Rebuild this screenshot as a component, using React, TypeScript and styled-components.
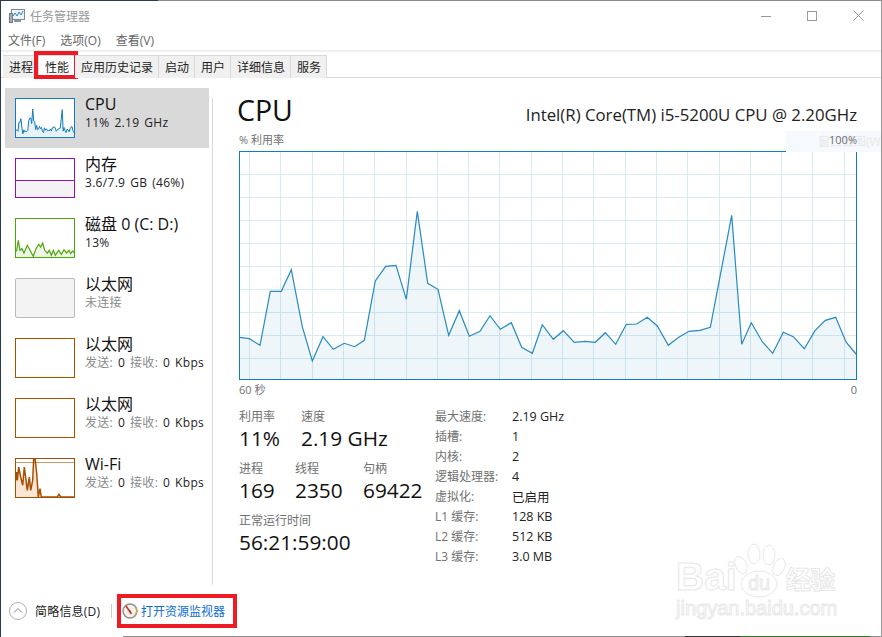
import React from "react"
import styled, { createGlobalStyle } from "styled-components"

const GlobalStyle = createGlobalStyle`
  html, body {
    margin: 0;
    padding: 0;
    background: #fff;
  }
  body {
    font-family: "Open Sans", "Noto Sans CJK SC", sans-serif;
    font-size: 12px;
    color: #111;
  }
`

const Window = styled.div`
  position: relative;
  box-sizing: border-box;
  width: 882px;
  height: 637px;
  display: flex;
  flex-direction: column;
  overflow: hidden;
  background: #fff;
  border-left: 1px solid #2c3c50;
  border-right: 1px solid #9a9a9a;
  &::before {
    content: "";
    position: absolute;
    top: 0;
    left: 0;
    right: 0;
    height: 1px;
    background: linear-gradient(90deg, #2c3c50 0 157px, #8c8c8c 157px);
  }
  &::after {
    content: "";
    position: absolute;
    bottom: 0;
    left: 0;
    right: 0;
    height: 1px;
    background: linear-gradient(
      90deg,
      #fff 0 122px,
      #8f8f8f 122px 684px,
      #333 684px 739px,
      #2a7a2a 739px 869px,
      #8f8f8f 869px
    );
  }
`

const TitleBar = styled.div`
  height: 30px;
  flex: none;
  box-sizing: border-box;
  padding: 1px 0 0 8px;
  display: flex;
  align-items: center;
  color: #999;
`

const TitleText = styled.span`
  margin-left: 5px;
  flex: 1;
`

const WindowButton = styled.div`
  width: 46px;
  height: 29px;
  display: flex;
  align-items: center;
  justify-content: center;
`

const MenuBar = styled.div`
  height: 20px;
  flex: none;
  display: flex;
  align-items: center;
  gap: 15px;
  padding-left: 7px;
  color: #666;
`

const Band = styled.div`
  height: 2px;
  flex: none;
  background: #f0f0f0;
`

const TabStrip = styled.div`
  height: 26px;
  flex: none;
  box-sizing: border-box;
  display: flex;
  align-items: flex-end;
  padding-left: 2px;
  border-bottom: 1px solid #d9d9d9;
`

const Tab = styled.div<{ $active?: boolean }>`
  position: relative;
  box-sizing: border-box;
  height: 23px;
  line-height: 23px;
  padding: 0 5px 0 6px;
  margin-bottom: -1px;
  background: ${(p) => (p.$active ? "#fff" : "#f0f0f0")};
  border-top: 1px solid #d9d9d9;
  border-right: 1px solid #d9d9d9;
  color: #222;
  &::after {
    content: ${(p) => (p.$active ? '""' : "none")};
    position: absolute;
    top: -5px;
    left: -5px;
    right: -4px;
    bottom: -1px;
    border: 4px solid #ed1c24;
  }
`

const Body = styled.div`
  flex: 1;
  min-height: 0;
  display: flex;
`

const Sidebar = styled.div`
  width: 211px;
  flex: none;
  box-sizing: border-box;
  padding: 10px 3px 0 4px;
`

const Divider = styled.div`
  width: 1px;
  flex: none;
  margin-top: 20px;
  background: #d9d9d9;
`

const SideItem = styled.div<{ $selected?: boolean }>`
  box-sizing: border-box;
  height: 60px;
  display: flex;
  gap: 10px;
  padding: 10px;
  background: ${(p) => (p.$selected ? "#d9d9d9" : "transparent")};
`

const Thumb = styled.div<{ $color: string; $bg?: string; $round?: boolean }>`
  box-sizing: border-box;
  width: 60px;
  height: 40px;
  flex: none;
  border: 1px solid ${(p) => p.$color};
  border-radius: ${(p) => (p.$round ? "2px" : "0")};
  background: ${(p) => p.$bg || "#fff"};
  overflow: hidden;
  svg {
    display: block;
  }
`

const SideText = styled.div`
  margin-top: -4px;
  white-space: nowrap;
`

const SideTitle = styled.div`
  font-size: 16px;
  line-height: 20px;
  color: #111;
`

const SideSub = styled.div`
  margin-top: 1px;
  font-size: 12px;
  line-height: 16px;
  letter-spacing: 0.3px;
  word-spacing: 1.5px;
  color: #222;
`

const Muted = styled.span`
  color: #8a8a8a;
`

const Main = styled.div`
  flex: 1;
  min-width: 0;
  box-sizing: border-box;
  padding: 14px 24px 0 25px;
`

const Header = styled.div`
  height: 36px;
  display: flex;
  justify-content: space-between;
  align-items: baseline;
  white-space: nowrap;
`

const BigTitle = styled.div`
  font-size: 28.5px;
  line-height: 36px;
  margin-left: -1px;
  color: #111;
`

const CpuName = styled.div`
  font-size: 16.8px;
  color: #222;
`

const AxisRow = styled.div<{ $top: number }>`
  position: relative;
  z-index: 1;
  display: flex;
  justify-content: space-between;
  margin-top: ${(p) => p.$top}px;
  margin-left: 1px;
  font-size: 11px;
  line-height: 14px;
  color: #707070;
`

const ChartBox = styled.div`
  margin: 4px 0 0 1px;
  width: 618px;
  height: 229px;
  svg {
    display: block;
  }
`

const Stats = styled.div`
  display: flex;
  margin: 9px 0 0 1px;
`

const LeftStats = styled.div`
  width: 196px;
  flex: none;
  padding-top: 3px;
  display: flex;
  flex-direction: column;
  gap: 9px;
`

const StatRow = styled.div`
  display: flex;
  white-space: nowrap;
`

const StatCell = styled.div<{ $width: number }>`
  width: ${(p) => p.$width}px;
`

const StatLabel = styled.div`
  line-height: 16px;
  color: #707070;
`

const StatValue = styled.div`
  font-size: 20.8px;
  line-height: 27px;
  color: #111;
`

const SpecTable = styled.div`
  display: grid;
  grid-template-columns: 77px auto;
  grid-auto-rows: 20px;
  align-items: center;
  font-size: 12px;
`

const SpecLabel = styled.div`
  color: #707070;
`

const SpecValue = styled.div`
  font-size: 12.5px;
  color: #222;
`

const Footer = styled.div`
  height: 52px;
  flex: none;
  box-sizing: border-box;
  padding: 1px 0 1px 8px;
  display: flex;
  align-items: center;
`

const FooterLabel = styled.span`
  margin-left: 8px;
  width: 76px;
  letter-spacing: 0.2px;
  color: #222;
  white-space: nowrap;
`

const FooterSep = styled.div`
  width: 1px;
  height: 14px;
  background: #ccc;
  margin-right: 5px;
`

const MonitorLink = styled.div`
  box-sizing: border-box;
  width: 120px;
  height: 34px;
  border: 4px solid #ed1c24;
  display: flex;
  align-items: center;
  padding-left: 1px;
  gap: 3px;
  color: #0a6cd6;
  white-space: nowrap;
`

const SnipHint = styled.div`
  position: absolute;
  left: 785px;
  top: 131px;
  width: 96px;
  height: 21px;
  box-sizing: border-box;
  padding-left: 32px;
  line-height: 21px;
  background: #f6f9fd;
  color: #e8e8e8;
  white-space: nowrap;
  overflow: hidden;
`

const Watermark = styled.div`
  position: absolute;
  left: 675px;
  top: 543px;
  width: 165px;
  color: #fff;
  -webkit-text-stroke: 1px #e8e8e8;
  font-family: "Liberation Sans", "Noto Sans CJK SC", sans-serif;
  font-weight: bold;
  white-space: nowrap;
`

const MarkTop = styled.div`
  display: flex;
  align-items: flex-end;
  height: 56px;
`

const MarkBai = styled.span`
  font-size: 39px;
  line-height: 44px;
  margin-right: -3px;
`

const MarkCn = styled.span`
  font-size: 25px;
  line-height: 38px;
  letter-spacing: -0.5px;
`

const MarkUrl = styled.div`
  font-size: 20px;
  line-height: 22px;
  margin-top: -2px;
  font-weight: normal;
`

const cpuPoints = (() => {
  const a = [
    [28, 622], [58, 626], [90, 646], [121, 484], [154, 484], [184, 419], [217, 590], [247, 693],
    [279, 620], [310, 658], [343, 640], [374, 650], [403, 631], [436, 453], [467, 409], [498, 406],
    [529, 508], [562, 244], [593, 460], [624, 478], [656, 616], [688, 542], [718, 619], [750, 604],
    [780, 557], [811, 598], [844, 578], [875, 652], [907, 670], [937, 584], [970, 628],
  ].map(([x, y]) => [x / 3 + 230, y / 3 + 130])
  const b = [
    [40, 602], [73, 637], [105, 634], [136, 637], [166, 608], [197, 643], [229, 583], [260, 582],
    [292, 562], [322, 588], [355, 646], [386, 622], [417, 604], [450, 601], [481, 592], [513, 424],
    [545, 256], [575, 643], [604, 578], [637, 635], [668, 670], [700, 607], [730, 620], [763, 656],
    [795, 602], [826, 571], [857, 562], [888, 636], [918, 672],
  ].map(([x, y]) => [x / 3 + 550, y / 3 + 130])
  return [...a, ...b]
})()

const toLine = (pts: number[][]) => pts.map(([x, y]) => `${x.toFixed(1)},${y.toFixed(1)}`).join(" ")
const cpuLine = toLine(cpuPoints)
const cpuArea = `239,379 ${cpuLine} 857,379`

const gridX = Array.from({ length: 20 }, (_, i) => Math.round(249 + 31.3 * i) + 0.5)
const gridY = Array.from({ length: 9 }, (_, i) => 174.5 + i * 23)

function CpuChart() {
  return (
    <svg width="618" height="229" viewBox="239 151 618 229">
      {gridX.map((x) => (
        <line key={x} x1={x} x2={x} y1={151} y2={380} stroke="#d9eaf4" />
      ))}
      {gridY.map((y) => (
        <line key={y} x1={239} x2={857} y1={y} y2={y} stroke="#d9eaf4" />
      ))}
      <polygon points={cpuArea} fill="rgba(17,125,187,0.07)" />
      <polyline points={cpuLine} fill="none" stroke="#117dbb" strokeWidth="1.2" opacity="0.9" />
      <rect x="239.5" y="151.5" width="617" height="228" fill="none" stroke="#117dbb" />
    </svg>
  )
}

function CpuThumb() {
  return (
    <svg width="58" height="38" viewBox="239 151 618 229" preserveAspectRatio="none">
      <polygon points={cpuArea} fill="rgba(17,125,187,0.1)" />
      <polyline points={cpuLine} fill="none" stroke="#117dbb" strokeWidth="1" vectorEffect="non-scaling-stroke" />
    </svg>
  )
}

function MemoryThumb() {
  return (
    <svg width="58" height="38" viewBox="0 0 58 38">
      <rect x="0" y="21" width="58" height="17" fill="#f4f2f4" />
      <line x1="0" x2="58" y1="21.5" y2="21.5" stroke="#8b12ae" />
    </svg>
  )
}

const diskLine = toLine(
  [
    [4, 105], [8, 100], [13, 70], [18, 100], [24, 95], [30, 108], [40, 85], [48, 100], [58, 118],
    [66, 95], [74, 82], [80, 90], [86, 78], [92, 100], [100, 108], [106, 100], [112, 115], [118, 100],
    [124, 115], [134, 100], [142, 112], [150, 98], [158, 108], [165, 100], [170, 110], [176, 102], [182, 108],
  ].map(([x, y]) => [x / 3 - 2, y / 3 - 2]),
)

function DiskThumb() {
  return (
    <svg width="58" height="38" viewBox="0 0 58 38">
      <polygon points={`0,38 ${diskLine} 58,38`} fill="#eef6e6" />
      <polyline points={diskLine} fill="none" stroke="#4da60c" strokeWidth="1.2" />
    </svg>
  )
}

const wifiLine = toLine(
  [
    [4, 75], [8, 45], [10, 70], [14, 30], [20, 60], [26, 85], [31, 30], [36, 70], [40, 100], [46, 60],
    [50, 100], [56, 70], [59, 3], [63, 3], [68, 50], [73, 120], [78, 95], [82, 120], [130, 120],
    [135, 112], [140, 120], [180, 120],
  ].map(([x, y]) => [x / 3 - 2, y / 3 - 2]),
)

function WifiThumb() {
  return (
    <svg width="58" height="38" viewBox="0 0 58 38">
      <polygon points={`0,38 ${wifiLine} 58,38`} fill="#fbe6d6" />
      <line x1="0" x2="58" y1="3.5" y2="3.5" stroke="#cb9a6c" />
      <polyline points={wifiLine} fill="none" stroke="#a74f01" strokeWidth="1.5" />
    </svg>
  )
}

function TaskIcon() {
  return (
    <svg width="16" height="16" viewBox="0 0 16 16">
      <rect x="2.5" y="1.5" width="13" height="10" fill="#eaf3f8" stroke="#7f8a92" />
      <polyline points="4,8 6,5 8,8 10,4 12,7 14,3" fill="none" stroke="#3b8bb8" />
      <rect x="0.5" y="5.5" width="3" height="9" fill="#a9b0b5" stroke="#6f7a82" />
      <rect x="5" y="12" width="7" height="2" fill="#8a949b" />
    </svg>
  )
}

function MonitorIcon() {
  return (
    <svg width="16" height="16" viewBox="0 0 16 16">
      <circle cx="8" cy="8" r="7" fill="#f4f1ea" stroke="#8d8d8d" strokeWidth="1.4" />
      <path d="M14 5a7 7 0 0 1-3 9" fill="none" stroke="#c9a25e" strokeWidth="1.4" />
      <line x1="4" y1="3" x2="9.5" y2="11" stroke="#d3322c" strokeWidth="1.6" />
      <circle cx="8" cy="8.5" r="1" fill="#555" />
    </svg>
  )
}

const sideItems = [
  { title: "CPU", color: "#117dbb", sub: <>11% 2.19 GHz</>, thumb: <CpuThumb />, selected: true },
  { title: "内存", color: "#8b12ae", sub: <>3.6/7.9 GB (46%)</>, thumb: <MemoryThumb /> },
  { title: "磁盘 0 (C: D:)", color: "#4da60c", sub: <>13%</>, thumb: <DiskThumb /> },
  { title: "以太网", color: "#b9b9b9", bg: "#f3f3f3", round: true, sub: <Muted>未连接</Muted> },
  { title: "以太网", color: "#a74f01", sub: <><Muted>发送:</Muted> 0 <Muted>接收:</Muted> 0 Kbps</> },
  { title: "以太网", color: "#a74f01", sub: <><Muted>发送:</Muted> 0 <Muted>接收:</Muted> 0 Kbps</> },
  { title: "Wi-Fi", color: "#a74f01", sub: <><Muted>发送:</Muted> 0 <Muted>接收:</Muted> 0 Kbps</>, thumb: <WifiThumb /> },
]

const specs = [
  ["最大速度:", "2.19 GHz"],
  ["插槽:", "1"],
  ["内核:", "2"],
  ["逻辑处理器:", "4"],
  ["虚拟化:", "已启用"],
  ["L1 缓存:", "128 KB"],
  ["L2 缓存:", "512 KB"],
  ["L3 缓存:", "3.0 MB"],
]

const tabs = ["进程", "性能", "应用历史记录", "启动", "用户", "详细信息", "服务"]

export default function App() {
  return (
    <Window>
      <GlobalStyle />
      <TitleBar>
        <TaskIcon />
        <TitleText>任务管理器</TitleText>
        <WindowButton>
          <svg width="10" height="10" viewBox="0 0 10 10">
            <line x1="0" x2="10" y1="5.5" y2="5.5" stroke="#999" />
          </svg>
        </WindowButton>
        <WindowButton>
          <svg width="10" height="10" viewBox="0 0 10 10">
            <rect x="0.5" y="0.5" width="9" height="9" fill="none" stroke="#999" />
          </svg>
        </WindowButton>
        <WindowButton>
          <svg width="11" height="11" viewBox="0 0 11 11">
            <path d="M0.5 0.5L10.5 10.5M10.5 0.5L0.5 10.5" stroke="#999" />
          </svg>
        </WindowButton>
      </TitleBar>
      <MenuBar>
        <span>文件(F)</span>
        <span>选项(O)</span>
        <span>查看(V)</span>
      </MenuBar>
      <Band />
      <TabStrip>
        {tabs.map((t) => (
          <Tab key={t} $active={t === "性能"}>
            {t}
          </Tab>
        ))}
      </TabStrip>
      <Body>
        <Sidebar>
          {sideItems.map((item, i) => (
            <SideItem key={i} $selected={item.selected}>
              <Thumb $color={item.color} $bg={item.bg} $round={item.round}>
                {item.thumb}
              </Thumb>
              <SideText>
                <SideTitle>{item.title}</SideTitle>
                <SideSub>{item.sub}</SideSub>
              </SideText>
            </SideItem>
          ))}
        </Sidebar>
        <Divider />
        <Main>
          <Header>
            <BigTitle>CPU</BigTitle>
            <CpuName>Intel(R) Core(TM) i5-5200U CPU @ 2.20GHz</CpuName>
          </Header>
          <AxisRow $top={5}>
            <span>% 利用率</span>
            <span>100%</span>
          </AxisRow>
          <ChartBox>
            <CpuChart />
          </ChartBox>
          <AxisRow $top={3}>
            <span>60 秒</span>
            <span>0</span>
          </AxisRow>
          <Stats>
            <LeftStats>
              <StatRow>
                <StatCell $width={62}>
                  <StatLabel>利用率</StatLabel>
                  <StatValue>11%</StatValue>
                </StatCell>
                <StatCell $width={120}>
                  <StatLabel>速度</StatLabel>
                  <StatValue>2.19 GHz</StatValue>
                </StatCell>
              </StatRow>
              <StatRow>
                <StatCell $width={56}>
                  <StatLabel>进程</StatLabel>
                  <StatValue>169</StatValue>
                </StatCell>
                <StatCell $width={68}>
                  <StatLabel>线程</StatLabel>
                  <StatValue>2350</StatValue>
                </StatCell>
                <StatCell $width={70}>
                  <StatLabel>句柄</StatLabel>
                  <StatValue>69422</StatValue>
                </StatCell>
              </StatRow>
              <div>
                <StatLabel>正常运行时间</StatLabel>
                <StatValue>56:21:59:00</StatValue>
              </div>
            </LeftStats>
            <SpecTable>
              {specs.map(([k, v]) => (
                <React.Fragment key={k}>
                  <SpecLabel>{k}</SpecLabel>
                  <SpecValue>{v}</SpecValue>
                </React.Fragment>
              ))}
            </SpecTable>
          </Stats>
        </Main>
      </Body>
      <Footer>
        <svg width="18" height="18" viewBox="0 0 18 18">
          <circle cx="9" cy="9" r="8.5" fill="none" stroke="#b0b0b0" />
          <path d="M5 10.5L9 6.5L13 10.5" fill="none" stroke="#888" />
        </svg>
        <FooterLabel>简略信息(D)</FooterLabel>
        <FooterSep />
        <MonitorLink>
          <MonitorIcon />
          打开资源监视器
        </MonitorLink>
      </Footer>
      <SnipHint>窗口截图(W)</SnipHint>
      <Watermark>
        <MarkTop>
          <MarkBai>Bai</MarkBai>
          <svg width="52" height="56" viewBox="0 0 52 56">
            <g fill="#fff" stroke="#e8e8e8">
              <ellipse cx="7" cy="22" rx="5.5" ry="9" transform="rotate(-25 7 22)" />
              <ellipse cx="20" cy="11" rx="6" ry="10" />
              <ellipse cx="35" cy="12" rx="6" ry="10" />
              <ellipse cx="45" cy="24" rx="5.5" ry="9" transform="rotate(25 45 24)" />
              <ellipse cx="25" cy="41" rx="18" ry="13" />
            </g>
            <text x="25" y="47" textAnchor="middle" fontSize="20" fontWeight="normal" fill="#fff" stroke="#e8e8e8">
              du
            </text>
          </svg>
          <MarkCn>经验</MarkCn>
        </MarkTop>
        <MarkUrl>jingyan.baidu.com</MarkUrl>
      </Watermark>
    </Window>
  )
}
